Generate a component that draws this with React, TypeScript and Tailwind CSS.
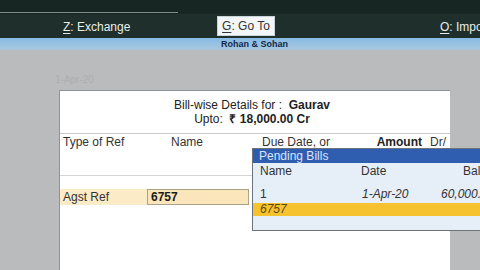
export default function App() {
  return (
    <div className="relative w-[480px] h-[270px] overflow-hidden bg-[#b9bbbd] font-['Liberation_Sans',Arial,sans-serif] text-[11px] text-[#222]">
      {/* Top strip */}
      <div className="h-[14px] bg-[#172523] flex flex-col justify-end">
        <div className="w-[178px] h-px bg-[#7f8e8b] mb-[1px]" />
      </div>

      {/* Menu bar */}
      <div className="relative h-[24px] bg-[#1e2f2c] text-[#e8eeec] text-[12px]">
        <span className="absolute left-[63px] top-[4px]">
          <span className="underline underline-offset-2">Z</span>: Exchange
        </span>
        <div className="absolute left-[217px] top-[2px] w-[58px] h-[20px] bg-[#f3f6f8] border border-[#c9d4da] text-[#333] flex items-center justify-center">
          <span className="underline underline-offset-2">G</span>: Go To
        </div>
        <span className="absolute left-[440px] top-[4px] whitespace-nowrap">
          <span className="underline underline-offset-2">O</span>: Import
        </span>
      </div>

      {/* Company strip */}
      <div className="h-[12px] bg-gradient-to-b from-[#86bbe4] to-[#a9c8df] flex items-center pl-[221px]">
        <span className="text-[9px] font-bold text-[#13284a] leading-none">Rohan &amp; Sohan</span>
      </div>

      {/* Faint date */}
      <div className="h-[40px] pl-[55px] pt-[22px] text-[10px] text-[#acaeb1]">1-Apr-20</div>

      {/* Main panel */}
      <div className="ml-[59px] w-[391px] h-[180px] bg-white border-l border-t border-[#8f9396]">
        <div className="h-[42px] flex flex-col items-center justify-center text-[12px] leading-[14px] text-[#222] pr-[6px]">
          <div>
            Bill-wise Details for :&nbsp; <span className="font-bold">Gaurav</span>
          </div>
          <div>
            Upto:&nbsp; <span className="font-bold">₹ 18,000.00 Cr</span>
          </div>
        </div>
        <div className="h-px bg-[#c9c9c9]" />
        <div className="h-[41px] flex items-start leading-[14px] pt-px text-[12px] text-[#333]">
          <span className="ml-[3px] w-[108px]">Type of Ref</span>
          <span className="w-[91px]">Name</span>
          <span className="w-[80px]">Due Date, or</span>
          <span className="w-[80px] text-right font-bold text-[#222]">Amount</span>
          <span className="ml-[8px]">Dr/</span>
        </div>
        <div className="w-[193px] h-px bg-[#d4d4d4]" />
        <div className="mt-[13px] w-[189px] h-[16px] bg-[#fcebc7] flex items-center text-[12px]">
          <span className="ml-[3px] w-[84px] text-[#333]">Agst Ref</span>
          <div className="flex-1 h-[16px] bg-[#fbe6bb] border border-[#a8a489] flex items-center pl-[3px] font-bold text-[#1a1a1a]">
            6757
          </div>
        </div>
      </div>

      {/* Pending bills popup */}
      <div className="absolute left-[252px] top-[148px] w-[240px] h-[83px] bg-[#e6eff8] border border-[#6d7379] text-[12px] leading-[14px]">
        <div className="h-[14px] bg-[#2f5daf] text-[#d8e6ff] pl-[6px]">Pending Bills</div>
        <div className="relative h-[22px] text-[#333]">
          <span className="absolute left-[7px] top-[1px]">Name</span>
          <span className="absolute left-[108px] top-[1px]">Date</span>
          <span className="absolute left-[210px] top-[1px]">Balance</span>
        </div>
        <div className="relative h-[18px] text-[#333] italic">
          <span className="absolute left-[7px] top-[2px] not-italic">1</span>
          <span className="absolute left-[109px] top-[2px]">1-Apr-20</span>
          <span className="absolute left-[188px] top-[2px]">60,000.00</span>
        </div>
        <div className="h-[13px] bg-[#f7c22f] italic text-[#5b4a0f] pl-[7px] leading-[13px]">6757</div>
      </div>
    </div>
  );
}
